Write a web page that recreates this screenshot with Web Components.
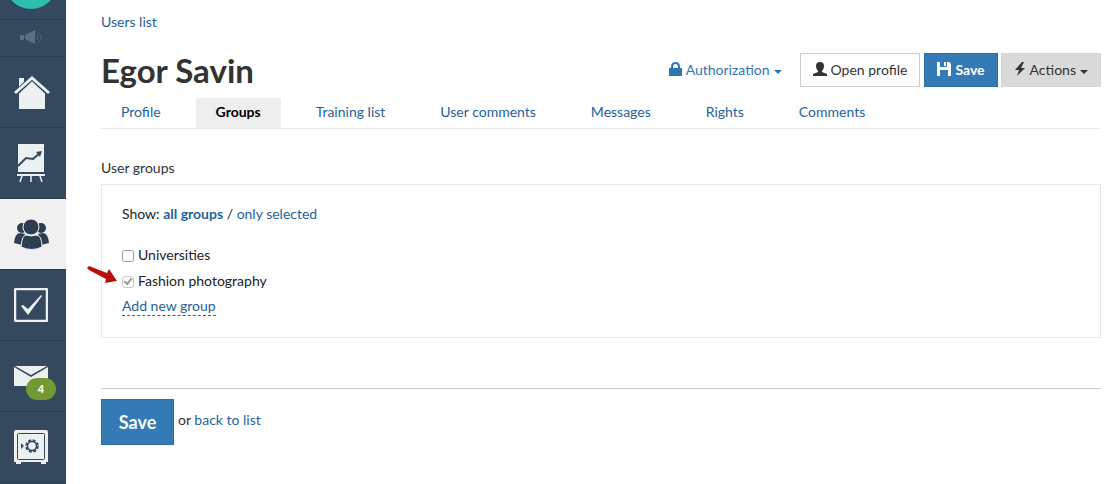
<!DOCTYPE html>
<html lang="en">
<head>
<meta charset="utf-8">
<title>Egor Savin – Groups</title>
<style>
body { margin: 0; background: #fff; color: #333; font: 14px/20px Lato, "Liberation Sans", sans-serif; }
</style>
</head>
<body>
<user-page></user-page>
<script>
const define = (name, html) => {
  const template = document.createElement('template');
  template.innerHTML = html;
  customElements.define(name, class extends HTMLElement {
    constructor() {
      super();
      this.attachShadow({ mode: 'open' }).append(template.content.cloneNode(true));
    }
    connectedCallback() {
      const link = this.shadowRoot.querySelector('a');
      if (link && this.title) link.setAttribute('aria-label', this.title);
      const box = this.shadowRoot.querySelector('input');
      if (box) {
        box.checked = this.hasAttribute('checked');
        box.disabled = this.hasAttribute('disabled');
      }
    }
  });
};

define('nav-item', `
<style>
  :host { display: block; height: 70px; border-bottom: 1px solid #2a3e50; flex: none; }
  :host([small]) { height: 36px; }
  :host([current]) { background: #f0f0f0; }
  a { display: flex; height: 100%; align-items: center; padding-left: 14px; color: #ecf0f1; }
  :host([current]) a { color: #2c3e50; }
</style>
<a href="#"><slot></slot></a>`);

define('count-badge', `
<style>
  :host { position: absolute; left: 12px; top: 12px; width: 30px; height: 22px; border-radius: 11px;
    background: #719a35; color: #fff; font: 900 11px/22px Lato, sans-serif; text-align: center; }
</style><slot></slot>`);

define('side-nav', `
<style>
  :host { display: flex; flex-direction: column; background: #34495e; }
  .avatar { height: 19px; border-bottom: 1px solid #2a3e50; flex: none; }
  svg { display: block; flex: none; }
  .mail { position: relative; }
</style>
<div class="avatar"><svg width="66" height="19"><circle cx="31" cy="-17" r="26" fill="#2bc0ae"/></svg></div>
<nav-item small title="News"><svg width="34" height="20" viewBox="0 0 34 20"><g fill="#5a7086"><path d="M6 7h4v5H6zM11 7l10-5v14l-10-5z"/><path d="M23 6q2 3 0 6M25 4q4 5 0 10" fill="none" stroke="#4c6278"/></g></svg></nav-item>
<nav-item title="Home"><svg width="36" height="36" viewBox="0 0 36 36" fill="currentColor"><path d="M5 4h5v4l-5 5z"/><path d="M5 18 18 6l13 12v17H5z"/><path d="M1 20 18 4l17 16" fill="none" stroke="#34495e" stroke-width="5"/><path d="M1 19 18 4l17 15" fill="none" stroke="currentColor" stroke-width="3"/></svg></nav-item>
<nav-item title="Statistics"><svg width="36" height="40" viewBox="0 0 36 40"><path d="M4 1h26v28H4zM3 31h28v2H3z" fill="currentColor"/><path d="M8 33 6 39M17 33v6M26 33l2 6" stroke="currentColor" stroke-width="1.500"/><path d="m4 23 8-8 7 1 7-6" fill="none" stroke="#34495e" stroke-width="2"/><path d="m22 9 6-1-2 6z" fill="#34495e"/></svg></nav-item>
<nav-item current title="Users"><svg width="36" height="32" viewBox="0 0 36 32" fill="currentColor"><circle cx="8" cy="10" r="5"/><circle cx="27" cy="10" r="5"/><path d="M0 25q1-10 6-10l5 1-3 11zM35 25q-1-10-6-10l-5 1 3 11z"/><path d="M17 1a8 8 0 0 1 8 8 8 8 0 0 1-16 0 8 8 0 0 1 8-8zM7 29q1-13 6-12 4 2 9 0 6 0 6 12-10 5-21 0z" stroke="#f0f0f0"/></svg></nav-item>
<nav-item title="Tasks"><svg width="34" height="34" viewBox="0 0 34 34"><rect x="1" y="1" width="32" height="32" rx="1" fill="none" stroke="currentColor" stroke-width="2.500"/><path d="m7 18 2-1 5 4L27 7l1 1-14 19z" fill="currentColor"/></svg></nav-item>
<nav-item title="Mail"><span class="mail"><svg width="34" height="20" viewBox="0 0 34 20"><path d="M1 0h32L17 9zM0 1l17 10L34 1v19H0z" fill="currentColor"/></svg><count-badge>4</count-badge></span></nav-item>
<nav-item title="Finance"><svg width="34" height="34" viewBox="0 0 34 34"><path d="M2 0h30q2 0 2 2v30h-2v2h-5v-2H7v2H2v-2H0V2q0-2 2-2z" fill="currentColor"/><g fill="none" stroke="#34495e"><rect x="3.500" y="3.500" width="27" height="26" rx="1"/><circle cx="18" cy="16" r="4.500" stroke-width="1.500"/><circle cx="18" cy="16" r="5.500" stroke-width="2.500" stroke-dasharray="2.800 1.520"/></g><path d="m7 13 3 3-3 3z" fill="#34495e"/></svg></nav-item>`);

define('top-button', `
<style>
  :host { display: block; }
  button { display: flex; align-items: center; justify-content: center; gap: 4px; width: 100%; height: 34px;
    padding: 0 12px; border: 1px solid transparent; background: none; color: #2f76b5; font: inherit; white-space: nowrap; }
  ::slotted(.icon) { margin-bottom: 3px; }
  ::slotted(.caret) { margin-top: 3px; }
  :host([kind=link]) button { padding: 0; }
  :host([kind=plain]) button { background: #fff; border-color: #ccc; color: #333; }
  :host([kind=primary]) button { background: #337ab7; border-color: #2e6da4; color: #fff; font-weight: bold; }
  :host([kind=grey]) button { background: #dadada; border-color: #d6d6d6; color: #333; }
</style>
<button type="button"><slot></slot></button>`);

define('tab-link', `
<style>
  :host { display: block; padding: 4px 20px 6px; height: 20px; }
  a { color: #1f629c; text-decoration: none; white-space: nowrap; }
  :host([current]) { background: #eee; }
  :host([current]) a { color: #000; font-weight: bold; }
</style>
<a href="#"><slot></slot></a>`);

define('group-option', `
<style>
  :host { display: block; }
  label { display: flex; align-items: center; gap: 4px; color: #222; }
  input { appearance: none; margin: 1px 0 0; width: 12px; height: 12px; box-sizing: border-box;
    border: 1px solid #9a9a9a; border-radius: 3px; background: #fff; display: grid; place-items: center; }
  input:disabled { border-color: #c8c8c8; }
  input:checked::before { content: ""; width: 8px; height: 5px; margin-bottom: 2px; box-sizing: border-box;
    border: solid #999; border-width: 0 0 2px 2px; rotate: -50deg; }
</style>
<label><input type="checkbox"><slot></slot></label>`);

define('group-panel', `
<style>
  :host { display: block; position: relative; margin-top: 6px; border: 1px solid #e8e8e8; padding: 19px 20px 20px; color: #222; }
  a { color: #1f629c; text-decoration: none; }
  p { margin: 0 0 21px; }
  group-option { margin-bottom: 6px; }
  .last { height: 20px; }
  .add { display: inline-block; line-height: 18px; border-bottom: 1px dashed #1f629c; vertical-align: top; }
  .pointer { position: absolute; left: -16px; top: 79px; }
</style>
<p>Show: <a href="#"><b>all groups</b></a> / <a href="#">only selected</a></p>
<group-option>Universities</group-option>
<group-option checked disabled>Fashion photography</group-option>
<div class="last"><a class="add" href="#">Add new group</a></div>
<svg class="pointer" width="32" height="22" viewBox="0 0 32 22"><path d="m1 4 2-2 18 7 2-4 8 12-12 2 1-4L3 6z" fill="#b90f0b"/></svg>`);

define('user-page', `
<style>
  :host { display: grid; grid-template-columns: 66px minmax(0, 1fr); min-height: 100vh; }
  side-nav { height: 100vh; overflow: hidden; }
  main { padding: 12px 10px 20px 35px; }
  a { color: #1f629c; text-decoration: none; }
  .crumb { display: block; }
  header { display: flex; align-items: center; margin-top: 21px; }
  h1 { margin: 0 auto 0 0; font-size: 33px; line-height: 34px; }
  .authorization { margin-right: 17px; }
  .profile { margin-right: 4px; }
  .save { margin-right: 3px; }
  nav { display: flex; gap: 15px; margin-top: 11px; border-bottom: 1px solid #e8e8e8; }
  h2 { margin: 29px 0 0; font-size: inherit; font-weight: normal; }
  footer { display: flex; gap: 4px; margin-top: 50px; padding-top: 10px; border-top: 1px solid #ccc; }
  footer button { height: 46px; min-width: 73px; padding: 0 16px; border: 1px solid #2e6da4; background: #337ab7; color: #fff; font: bold 18px/24px Lato, sans-serif; }
  footer span { margin-top: 11px; }
</style>
<side-nav></side-nav>
<main>
  <a class="crumb" href="#">Users list</a>
  <header>
    <h1>Egor Savin</h1>
    <top-button class="authorization" kind="link"><svg class="icon" width="13" height="14" viewBox="0 0 13 14"><path d="M0 6h2V5q0-5 4.500-5T11 5v1h2v8H0zM4 6h5V5q0-3-2.500-3T4 5z" fill="currentColor"/></svg>Authorization<svg class="caret" width="8" height="4"><path d="M0 0h8L4 4z" fill="currentColor"/></svg></top-button>
    <top-button class="profile" kind="plain"><svg class="icon" width="14" height="14" viewBox="0 0 14 14"><path d="M7 0q4 0 4 4 0 3-2 5v1l5 2v2H0v-2l5-2V9Q3 7 3 4q0-4 4-4z" fill="currentColor"/></svg>Open profile</top-button>
    <top-button class="save" kind="primary"><svg class="icon" width="14" height="14" viewBox="0 0 14 14"><path d="M0 0h3v5h7V0h2l2 2v12h-3V8H3v6H0zM7 0h2v4H7z" fill="currentColor"/></svg>Save</top-button>
    <top-button kind="grey"><svg class="icon" width="12" height="14" viewBox="0 0 12 14"><path d="M8 0 1 8h4l-2 6 8-8H7l3-6z" fill="currentColor"/></svg>Actions<svg class="caret" width="8" height="4"><path d="M0 0h8L4 4z" fill="currentColor"/></svg></top-button>
  </header>
  <nav>
    <tab-link>Profile</tab-link><tab-link current>Groups</tab-link><tab-link>Training list</tab-link><tab-link>User comments</tab-link><tab-link>Messages</tab-link><tab-link>Rights</tab-link><tab-link>Comments</tab-link>
  </nav>
  <h2>User groups</h2>
  <group-panel></group-panel>
  <footer><button type="submit">Save</button><span>or <a href="#">back to list</a></span></footer>
</main>`);
</script>
</body>
</html>
